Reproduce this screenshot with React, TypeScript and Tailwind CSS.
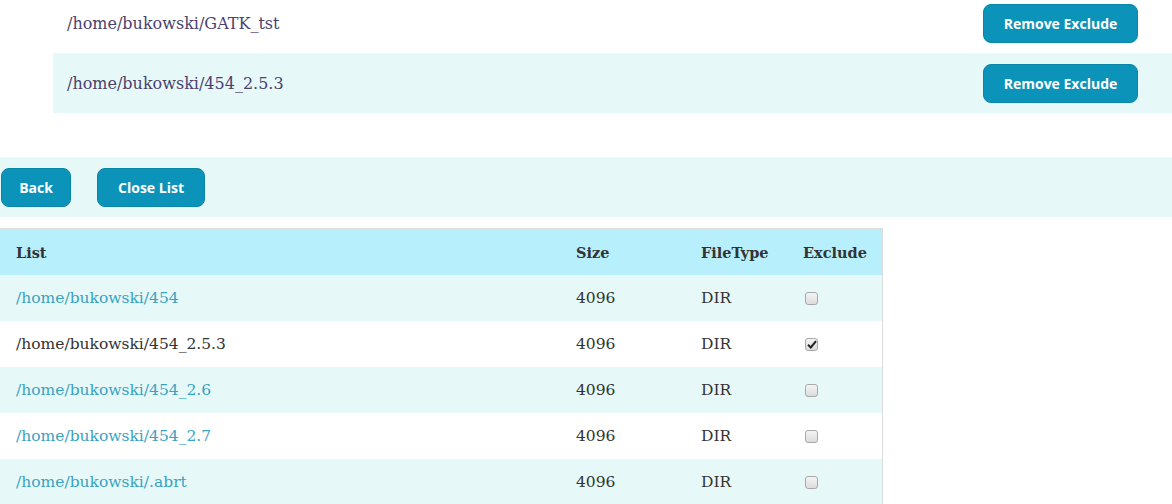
import React from "react";

const serif = { fontFamily: '"DejaVu Serif", serif' };

function Btn({ children, className = "" }: { children: React.ReactNode; className?: string }) {
  return (
    <button
      className={`h-[39px] rounded-[8px] bg-[#0c93b9] text-white font-bold text-[14px] border border-[#0a86a8] ${className}`}
      style={{ fontFamily: '"Open Sans", sans-serif' }}
    >
      {children}
    </button>
  );
}

function Check({ checked }: { checked?: boolean }) {
  return (
    <span className="inline-flex w-[13px] h-[13px] rounded-[3px] border border-[#a9a9a9] bg-gradient-to-b from-[#f4f4f4] to-[#dcdcdc] items-center justify-center">
      {checked && (
        <svg width="10" height="9" viewBox="0 0 10 9">
          <path d="M1 4.8 L3.8 7.5 L9 1.2" fill="none" stroke="#222" strokeWidth="2" />
        </svg>
      )}
    </span>
  );
}

const rows = [
  { p: "/home/bukowski/454", link: true, checked: false },
  { p: "/home/bukowski/454_2.5.3", link: false, checked: true },
  { p: "/home/bukowski/454_2.6", link: true, checked: false },
  { p: "/home/bukowski/454_2.7", link: true, checked: false },
  { p: "/home/bukowski/.abrt", link: true, checked: false },
];

export default function App() {
  return (
    <div className="w-[1172px] h-[504px] overflow-hidden bg-white" style={serif}>
      <div className="ml-[53px] -mt-[7px]">
        <div className="h-[60px] flex items-center justify-between pl-[14px] pr-[34px]">
          <span className="text-[16px] text-[#4b3f6e] pt-[2px]">/home/bukowski/GATK_tst</span>
          <Btn className="w-[155px] mt-[1px]">Remove Exclude</Btn>
        </div>
        <div className="h-[60px] flex items-center justify-between pl-[14px] pr-[34px] bg-[#e6f9f8]">
          <span className="text-[16px] text-[#4b3f6e] pt-[2px]">/home/bukowski/454_2.5.3</span>
          <Btn className="w-[155px]">Remove Exclude</Btn>
        </div>
      </div>
      <div className="mt-[44px] h-[60px] bg-[#e6f9f8] flex items-center gap-[26px] pl-[1px]">
        <Btn className="w-[70px]">Back</Btn>
        <Btn className="w-[108px]">Close List</Btn>
      </div>
      <div className="mt-[11px] w-[883px] border-t border-r border-[#dddddd]">
        <div className="h-[46px] bg-[#b7effd] flex items-center font-bold text-[14.5px] text-[#333] pt-[1px]">
          <div className="w-[560px] pl-[16px]">List</div>
          <div className="w-[125px] pl-[16px]">Size</div>
          <div className="w-[102px] pl-[16px]">FileType</div>
          <div className="pl-[16px]">Exclude</div>
        </div>
        {rows.map((r, i) => (
          <div
            key={r.p}
            className={`h-[46px] flex items-center text-[15.5px] text-[#333] ${i % 2 === 0 ? "bg-[#e6f9f8]" : "bg-white"}`}
          >
            <div className={`w-[560px] pl-[16px] pt-[2px] ${r.link ? "text-[#3aa2c2]" : "text-[#333]"}`}>{r.p}</div>
            <div className="w-[125px] pl-[16px] pt-[2px]">4096</div>
            <div className="w-[102px] pl-[16px] pt-[2px]">DIR</div>
            <div className="pl-[18px] flex items-center">
              <Check checked={r.checked} />
            </div>
          </div>
        ))}
      </div>
    </div>
  );
}
